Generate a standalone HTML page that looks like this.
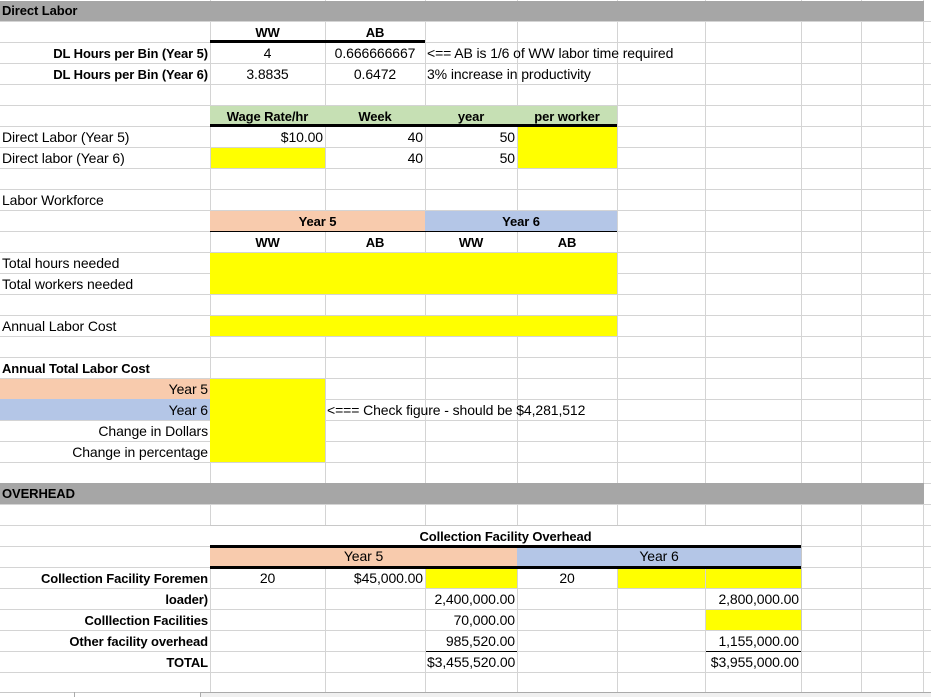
<!DOCTYPE html>
<html><head><meta charset="utf-8"><style>
*{margin:0;padding:0;box-sizing:border-box}
body{width:931px;height:697px;background:#fff;position:relative;overflow:hidden;font-family:"Liberation Sans",sans-serif;font-size:14px;color:#000}
.gl{position:absolute;background:#d4d4d4}
.f{position:absolute}
.t{position:absolute;height:21px;line-height:21px;white-space:nowrap;padding:0 2px;letter-spacing:-0.1px}
.b{font-weight:bold;font-size:13px;letter-spacing:-0.1px}
.r{text-align:right}.c{text-align:center}
.y{background:#ffff00}.p{background:#f8cbad}.bl{background:#b4c6e7}.g{background:#c6e0b4}.gr{background:#a6a6a6}
.k{position:absolute;background:#000}
</style></head><body>
<div class="gl" style="left:210px;top:0;width:1px;height:697px"></div>
<div class="gl" style="left:325px;top:0;width:1px;height:697px"></div>
<div class="gl" style="left:425px;top:0;width:1px;height:697px"></div>
<div class="gl" style="left:517px;top:0;width:1px;height:697px"></div>
<div class="gl" style="left:617px;top:0;width:1px;height:697px"></div>
<div class="gl" style="left:705px;top:0;width:1px;height:697px"></div>
<div class="gl" style="left:801px;top:0;width:1px;height:697px"></div>
<div class="gl" style="left:861px;top:0;width:1px;height:697px"></div>
<div class="gl" style="left:923px;top:0;width:1px;height:697px"></div>
<div id="h"></div>
<script>
var s='';for(var i=1;i<34;i++){s+='<div class="gl" style="left:0;top:'+(i*21)+'px;width:931px;height:1px"></div>';}
document.getElementById('h').outerHTML=s;
</script>

<div class="f gr" style="left:0;top:1px;width:924px;height:20px"></div>
<div class="t b" style="left:0;top:1px;height:20px;line-height:20px">Direct Labor</div>
<div class="f gr" style="left:0;top:483px;width:924px;height:21px"></div>
<div class="t b" style="left:0;top:483px">OVERHEAD</div>

<div class="t b c" style="left:210px;top:22px;width:115px">WW</div>
<div class="t b c" style="left:325px;top:22px;width:100px">AB</div>
<div class="k" style="left:210px;top:40px;width:215px;height:3px"></div>
<div class="t b r" style="left:0;top:43px;width:210px">DL Hours per Bin (Year 5)</div>
<div class="t c" style="left:210px;top:43px;width:115px">4</div>
<div class="t c" style="left:325px;top:43px;width:100px">0.666666667</div>
<div class="t" style="left:425px;top:43px">&lt;== AB is 1/6 of WW labor time required</div>
<div class="t b r" style="left:0;top:64px;width:210px">DL Hours per Bin (Year 6)</div>
<div class="t c" style="left:210px;top:64px;width:115px">3.8835</div>
<div class="t c" style="left:325px;top:64px;width:100px">0.6472</div>
<div class="t" style="left:425px;top:64px">3% increase in productivity</div>

<div class="f g" style="left:210px;top:106px;width:407px;height:20px"></div>
<div class="t b c" style="left:210px;top:106px;width:115px">Wage Rate/hr</div>
<div class="t b c" style="left:325px;top:106px;width:100px">Week</div>
<div class="t b c" style="left:425px;top:106px;width:92px">year</div>
<div class="t b c" style="left:517px;top:106px;width:100px">per worker</div>
<div class="k" style="left:210px;top:124px;width:407px;height:3px"></div>
<div class="f y" style="left:518px;top:127px;width:99px;height:41px"></div>
<div class="f y" style="left:211px;top:148px;width:114px;height:20px"></div>
<div class="t" style="left:0;top:127px">Direct Labor (Year 5)</div>
<div class="t r" style="left:210px;top:127px;width:115px">$10.00</div>
<div class="t r" style="left:325px;top:127px;width:100px">40</div>
<div class="t r" style="left:425px;top:127px;width:92px">50</div>
<div class="t" style="left:0;top:148px">Direct labor (Year 6)</div>
<div class="t r" style="left:325px;top:148px;width:100px">40</div>
<div class="t r" style="left:425px;top:148px;width:92px">50</div>

<div class="t" style="left:0;top:190px">Labor Workforce</div>
<div class="f p" style="left:210px;top:211px;width:215px;height:20px"></div>
<div class="f bl" style="left:425px;top:211px;width:192px;height:20px"></div>
<div class="t b c" style="left:210px;top:211px;width:215px">Year 5</div>
<div class="t b c" style="left:425px;top:211px;width:192px">Year 6</div>
<div class="k" style="left:210px;top:231px;width:407px;height:1px"></div>
<div class="t b c" style="left:210px;top:232px;width:115px">WW</div>
<div class="t b c" style="left:325px;top:232px;width:100px">AB</div>
<div class="t b c" style="left:425px;top:232px;width:92px">WW</div>
<div class="t b c" style="left:517px;top:232px;width:100px">AB</div>
<div class="f y" style="left:210px;top:253px;width:407px;height:41px"></div>
<div class="t" style="left:0;top:253px">Total hours needed</div>
<div class="t" style="left:0;top:274px">Total workers needed</div>
<div class="f y" style="left:210px;top:316px;width:407px;height:20px"></div>
<div class="t" style="left:0;top:316px">Annual Labor Cost</div>

<div class="t b" style="left:0;top:358px">Annual Total Labor Cost</div>
<div class="f p" style="left:0;top:379px;width:210px;height:20px"></div>
<div class="f bl" style="left:0;top:399px;width:210px;height:21px"></div>
<div class="f y" style="left:210px;top:379px;width:115px;height:83px"></div>
<div class="t r" style="left:0;top:379px;width:210px">Year 5</div>
<div class="t r" style="left:0;top:400px;width:210px">Year 6</div>
<div class="t r" style="left:0;top:421px;width:210px">Change in Dollars</div>
<div class="t r" style="left:0;top:442px;width:210px">Change in percentage</div>
<div class="t" style="left:325px;top:400px">&lt;=== Check figure - should be $4,281,512</div>

<div class="f" style="left:210px;top:526px;width:591px;height:20px;background:#fff"></div>
<div class="gl" style="left:801px;top:525px;width:1px;height:147px;background:#c8c8c8"></div>
<div class="gl" style="left:210px;top:525px;width:591px;height:1px;background:#c8c8c8"></div>
<div class="t b c" style="left:210px;top:526px;width:591px">Collection Facility Overhead</div>
<div class="k" style="left:210px;top:545px;width:591px;height:3px"></div>
<div class="f p" style="left:210px;top:548px;width:307px;height:18px"></div>
<div class="f bl" style="left:517px;top:548px;width:284px;height:18px"></div>
<div class="t c" style="left:210px;top:546px;width:307px">Year 5</div>
<div class="t c" style="left:517px;top:546px;width:284px">Year 6</div>
<div class="k" style="left:210px;top:566px;width:591px;height:3px"></div>
<div class="f y" style="left:426px;top:569px;width:91px;height:19px"></div>
<div class="f y" style="left:618px;top:569px;width:87px;height:19px"></div>
<div class="f y" style="left:706px;top:569px;width:95px;height:19px"></div>
<div class="f y" style="left:706px;top:610px;width:95px;height:20px"></div>
<div class="t b r" style="left:0;top:568px;width:210px">Collection Facility Foremen</div>
<div class="t c" style="left:210px;top:568px;width:115px">20</div>
<div class="t r" style="left:325px;top:568px;width:100px">$45,000.00</div>
<div class="t c" style="left:517px;top:568px;width:100px">20</div>
<div class="t b r" style="left:0;top:589px;width:210px">loader)</div>
<div class="t r" style="left:425px;top:589px;width:92px">2,400,000.00</div>
<div class="t r" style="left:705px;top:589px;width:96px">2,800,000.00</div>
<div class="t b r" style="left:0;top:610px;width:210px">Colllection Facilities</div>
<div class="t r" style="left:425px;top:610px;width:92px">70,000.00</div>
<div class="t b r" style="left:0;top:631px;width:210px">Other facility overhead</div>
<div class="t r" style="left:425px;top:631px;width:92px">985,520.00</div>
<div class="t r" style="left:705px;top:631px;width:96px">1,155,000.00</div>
<div class="k" style="left:426px;top:651px;width:91px;height:1px"></div>
<div class="k" style="left:706px;top:651px;width:95px;height:1px"></div>
<div class="t b r" style="left:0;top:652px;width:210px">TOTAL</div>
<div class="t r" style="left:425px;top:652px;width:92px">$3,455,520.00</div>
<div class="t r" style="left:705px;top:652px;width:96px">$3,955,000.00</div>

<div class="f" style="left:0;top:692px;width:931px;height:5px;background:#fff;border-top:1px solid #c8c8c8"></div>
<div class="f" style="left:74px;top:692px;width:1px;height:5px;background:#aaa"></div>
<div class="f" style="left:200px;top:692px;width:731px;height:5px;background:#f0f0f0;border-left:1px solid #aaa;border-top:1px solid #aaa"></div>
</body></html>
